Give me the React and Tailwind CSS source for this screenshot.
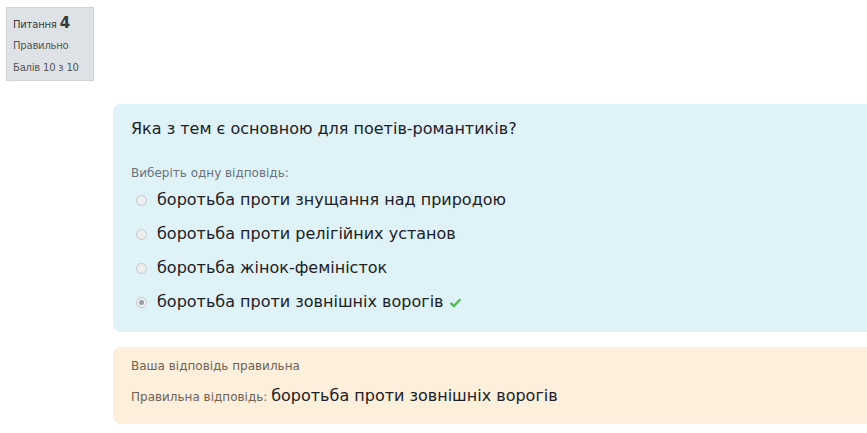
import React from "react";

const options = [
  "боротьба проти знущання над природою",
  "боротьба проти релігійних установ",
  "боротьба жінок-феміністок",
  "боротьба проти зовнішніх ворогів",
];

function Radio({ checked }) {
  return (
    <span className="flex h-[11px] w-[11px] items-center justify-center rounded-full border border-[#c4c8cc] bg-[#eceeef]">
      {checked && <span className="h-[5px] w-[5px] rounded-full bg-[#9aa0a6]" />}
    </span>
  );
}

function Check() {
  return (
    <svg viewBox="0 0 16 16" className="ml-[5px] h-[13px] w-[13px]">
      <path d="M2 8.5 L6 12.5 L14 4" fill="none" stroke="#5cb85c" strokeWidth="3" strokeLinejoin="round" />
    </svg>
  );
}

export default function App() {
  return (
    <div className="h-[433px] w-[867px] overflow-hidden bg-white font-['DejaVu_Sans',sans-serif] text-[#1d2125]">
      <div className="flex">
        {/* question info */}
        <div className="ml-[6px] mt-[7px] h-[74px] w-[88px] shrink-0 whitespace-nowrap border border-[#cfd3d8] bg-[#dee2e6] px-[6px] pt-[6px] text-[10px] tracking-[-0.2px] text-[#373a3c]">
          <div className="flex items-baseline gap-[3px] leading-[18px]">
            Питання <span className="text-[15px] font-bold">4</span>
          </div>
          <div className="mt-[3px] leading-[18px] text-[#555]">Правильно</div>
          <div className="mt-[4px] leading-[18px] text-[#555]">Балів 10 з 10</div>
        </div>

        <div className="ml-[19px] mt-[104px] flex-1">
          {/* question */}
          <div className="h-[228px] rounded-l-[8px] bg-[#def2f8] pl-[18px] pt-[13px]">
            <div className="text-[16px] leading-[24px]">Яка з тем є основною для поетів-романтиків?</div>
            <div className="mt-[24px] text-[12px] leading-[16px] text-[#6a737b]">Виберіть одну відповідь:</div>
            <div className="mt-[2px] flex flex-col">
              {options.map((o, i) => (
                <div key={o} className="flex h-[34px] items-center">
                  <span className="ml-[5px] mr-[10px]">
                    <Radio checked={i === 3} />
                  </span>
                  <span className="text-[16px]">{o}</span>
                  {i === 3 && <Check />}
                </div>
              ))}
            </div>
          </div>

          {/* feedback */}
          <div className="mt-[15px] h-[77px] rounded-l-[8px] bg-[#fcefdc] pl-[18px] pt-[11px]">
            <div className="text-[12px] leading-[16px] text-[#6e6256]">Ваша відповідь правильна</div>
            <div className="mt-[10px] flex items-baseline">
              <span className="text-[12px] text-[#6e6256]">Правильна відповідь:&nbsp;</span>
              <span className="text-[16px]">боротьба проти зовнішніх ворогів</span>
            </div>
          </div>
        </div>
      </div>
    </div>
  );
}
